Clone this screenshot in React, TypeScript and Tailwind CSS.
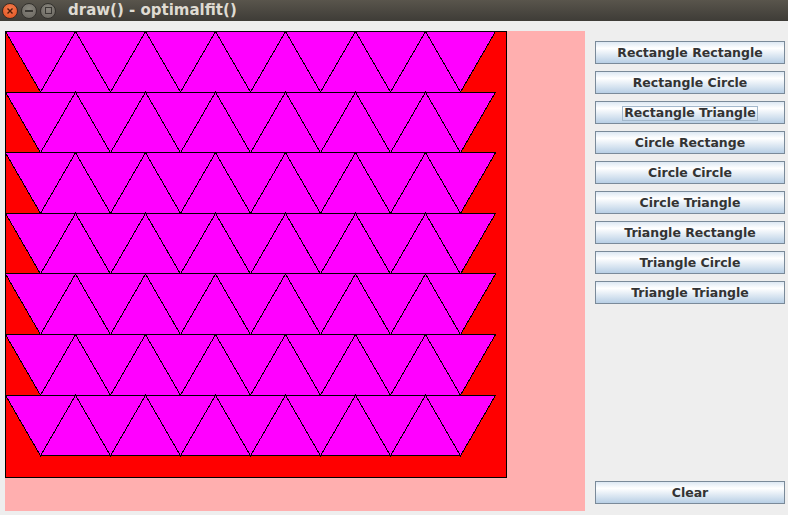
import React from "react";

const H = 70 * Math.sqrt(3) / 2;

function Canvas() {
  const polys: string[] = [];
  for (let r = 0; r < 7; r++) {
    const t = r * H + 0.5;
    const b = t + H;
    for (let j = 0; j < 7; j++) {
      const x = 70 * j + 0.5;
      polys.push(`${x},${t} ${x + 70},${t} ${x + 35},${b}`);
    }
    for (let j = 0; j < 6; j++) {
      const x = 70 * j + 35.5;
      polys.push(`${x},${b} ${x + 70},${b} ${x + 35},${t}`);
    }
  }
  return (
    <svg width="580" height="480" viewBox="0 0 580 480" className="block">
      <rect x="0.5" y="0.5" width="501" height="446" fill="#ff0000" stroke="#000" strokeWidth="1" shapeRendering="crispEdges" />
      {polys.map((p, i) => (
        <polygon key={i} points={p} fill="#ff00ff" stroke="#000" strokeWidth="1" shapeRendering="crispEdges" />
      ))}
    </svg>
  );
}

function Btn({ label, focus }: { label: string; focus?: boolean }) {
  return (
    <div className="h-[23px] w-[190px] border border-[#7a8a99] bg-[linear-gradient(to_bottom,#dde8f3,#ffffff_30%,#b8cfe5)] flex items-center justify-center pt-[1px] text-[12.5px] font-bold text-[#333333] leading-none" style={{ fontFamily: '"DejaVu Sans", sans-serif' }}>
      {focus ? (
        <span className="border border-[#a3b8cc] px-[1px] h-[15px] flex items-center">{label}</span>
      ) : (
        <span>{label}</span>
      )}
    </div>
  );
}

export default function App() {
  const labels = [
    "Rectangle Rectangle",
    "Rectangle Circle",
    "Rectangle Triangle",
    "Circle Rectange",
    "Circle Circle",
    "Circle Triangle",
    "Triangle Rectangle",
    "Triangle Circle",
    "Triangle Triangle",
  ];
  return (
    <div className="w-[788px] h-[515px] flex flex-col bg-[#eeeeee] overflow-hidden">
      <div className="h-[21px] bg-[linear-gradient(to_bottom,#59554c,#3e3c37)] flex items-center shrink-0">
        <div className="flex items-center gap-[3px] pl-[2px]">
          <div className="w-[16px] h-[16px] rounded-full bg-[radial-gradient(circle_at_50%_35%,#f47f4f,#e0501d)] border border-[#3a2a22] flex items-center justify-center">
            <svg width="8" height="8" viewBox="0 0 8 8"><path d="M1.5 1.5 L6.5 6.5 M6.5 1.5 L1.5 6.5" stroke="#4a1a08" strokeWidth="1.4" /></svg>
          </div>
          <div className="w-[16px] h-[16px] rounded-full bg-[radial-gradient(circle_at_50%_35%,#8a877f,#67645d)] border border-[#33312d] flex items-center justify-center">
            <div className="w-[8px] h-[2px] bg-[#3a3834]" />
          </div>
          <div className="w-[16px] h-[16px] rounded-full bg-[radial-gradient(circle_at_50%_35%,#8a877f,#67645d)] border border-[#33312d] flex items-center justify-center">
            <div className="w-[7px] h-[7px] border border-[#3a3834]" />
          </div>
        </div>
        <div className="ml-[12px] text-[15px] font-bold text-[#dfdbd2] leading-none" style={{ fontFamily: '"DejaVu Sans", sans-serif' }}>
          draw() - optimalfit()
        </div>
      </div>
      <div className="flex-1 flex pt-[10px] pl-[5px]">
        <div className="w-[580px] h-[480px] bg-[#ffafaf]">
          <Canvas />
        </div>
        <div className="ml-[10px] h-[480px] flex flex-col pt-[10px] pb-[7px]">
          <div className="flex flex-col gap-[7px]">
            {labels.map((l) => (
              <Btn key={l} label={l} focus={l === "Rectangle Triangle"} />
            ))}
          </div>
          <div className="mt-auto">
            <Btn label="Clear" />
          </div>
        </div>
      </div>
    </div>
  );
}
